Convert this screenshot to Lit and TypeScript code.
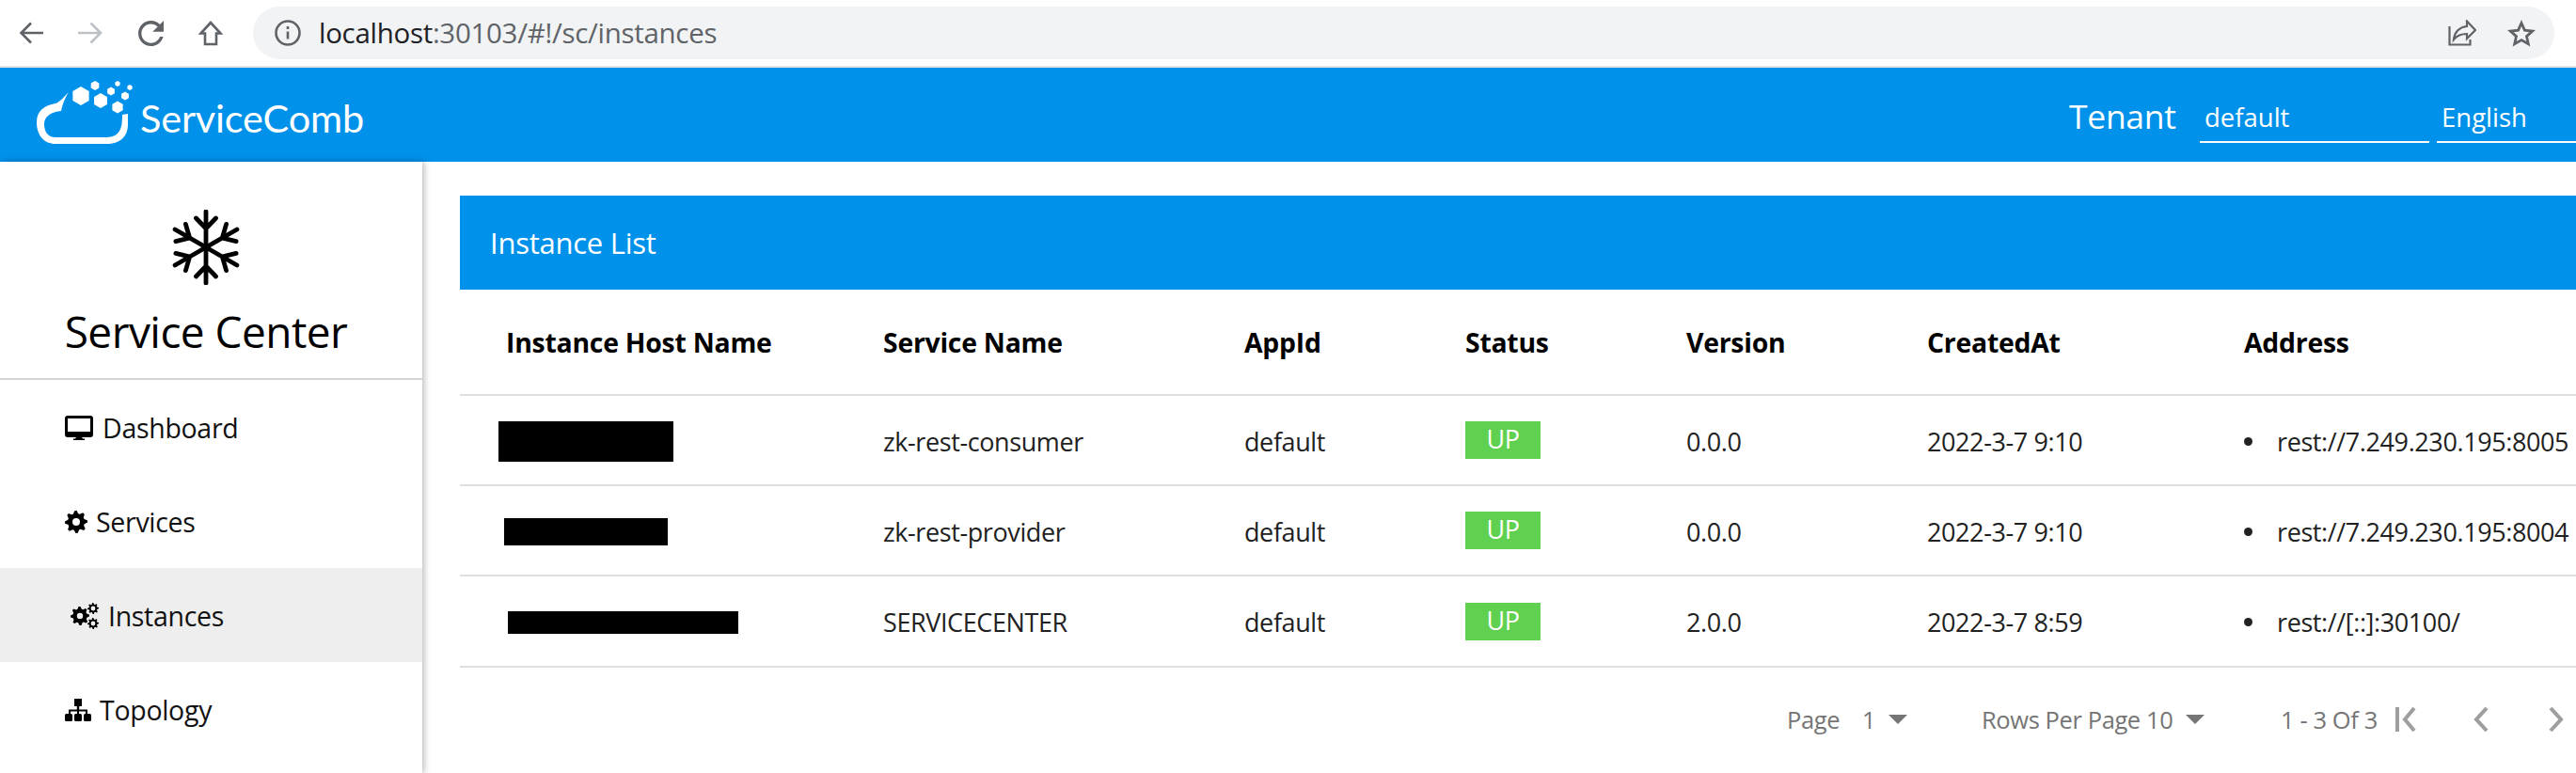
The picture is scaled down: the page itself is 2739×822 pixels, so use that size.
import { LitElement, html, css, svg } from "lit";
import { customElement } from "lit/decorators.js";

function gear(cx: number, cy: number, ro: number, ri: number, hole: number, teeth = 8) {
  let d = "";
  const n = teeth * 4;
  for (let i = 0; i < n; i++) {
    const a = (i / n) * Math.PI * 2 - Math.PI / n * 1.5 - Math.PI / 2;
    const r = i % 4 < 2 ? ro : ri;
    d += `${i ? "L" : "M"}${(cx + r * Math.cos(a)).toFixed(2)} ${(cy + r * Math.sin(a)).toFixed(2)}`;
  }
  d += `ZM${cx + hole} ${cy}A${hole} ${hole} 0 1 0 ${cx - hole} ${cy}A${hole} ${hole} 0 1 0 ${cx + hole} ${cy}Z`;
  return d;
}

const hexes: [number, number, number][] = [
  [47, 16, 10], [68, 21, 8], [86, 28, 6.5], [62, 5, 5], [79, 11, 4.5], [94, 16, 4.5], [86, 3, 3], [99, 7, 3],
];
const hexPath = (x: number, y: number, r: number) =>
  [0, 1, 2, 3, 4, 5]
    .map((i) => {
      const a = (i * Math.PI) / 3 + Math.PI / 6;
      return `${i ? "L" : "M"}${(x + r * Math.cos(a)).toFixed(2)} ${(y + r * Math.sin(a)).toFixed(2)}`;
    })
    .join("") + "Z";

const rows = [
  { w: 186, h: 43, m: 41, svc: "zk-rest-consumer", ver: "0.0.0", at: "2022-3-7 9:10", addr: "rest://7.249.230.195:8005" },
  { w: 174, h: 29, m: 47, svc: "zk-rest-provider", ver: "0.0.0", at: "2022-3-7 9:10", addr: "rest://7.249.230.195:8004" },
  { w: 245, h: 24, m: 51, svc: "SERVICECENTER", ver: "2.0.0", at: "2022-3-7 8:59", addr: "rest://[::]:30100/" },
];

@customElement("app-root")
export class AppRoot extends LitElement {
  static styles = css`
    :host { display: block; width: 100%; height: 822px; overflow: hidden; background: #fff;
      font-family: "Open Sans", "Noto Sans", sans-serif; color: #000; }
    .toolbar { height: 70px; display: flex; align-items: center; border-bottom: 2px solid #e3e3e3; box-sizing: content-box; }
    .nav-icons { display: flex; align-items: center; padding-left: 20px; gap: 37px; width: 269px; flex: none; box-sizing: border-box; }
    .nav-icons svg { display: block; fill: none; stroke: #5f6368; stroke-width: 2.6; }
    .nav-icons svg.off { stroke: #bdc1c6; }
    .nav-icons svg.solid { fill: #5f6368; stroke: none; }
    .bar { width: 2447px; flex: none; height: 56px; border-radius: 28px; background: #f1f3f4; display: flex; align-items: center;
      padding: 0 20px 0 23px; box-sizing: border-box; }
    .url { margin: -2px 0 0 19px; font-size: 29.5px; color: #5f6368; letter-spacing: -0.3px; flex: 1; white-space: nowrap; }
    .url b { font-weight: 400; color: #202124; }
    .bar svg { display: block; flex: none; }
    .bar .share { margin-right: 33px; }
    .header { height: 100px; background: #0091ea; color: #fff; display: flex; align-items: center; }
    .logo { display: flex; align-items: center; padding-left: 39px; flex: 1; }
    .logo svg { display: block; margin-top: -5px; }
    .logo span { font-family: "Lato", sans-serif; font-weight: 400; font-size: 41.5px; margin-left: 8px; margin-top: 6px; letter-spacing: -0.2px; }
    .tenant { font-size: 35.5px; width: 139px; margin-top: 2px; letter-spacing: -0.3px; }
    .field { border-bottom: 2px solid #fff; font-size: 27.5px; height: 46px; line-height: 38px; box-sizing: border-box; align-self: flex-end; margin-bottom: 20px; }
    .f1 { width: 244px; padding-left: 5px; margin-right: 8px; }
    .f2 { width: 148px; padding-left: 5px; }
    .body { display: flex; height: 650px; }
    .side { width: 449px; flex: none; background: #fff; box-shadow: 2px 0 7px rgba(0, 0, 0, 0.28); position: relative; }
    .brand { height: 230px; border-bottom: 2px solid #d5d5d5; box-sizing: content-box; text-align: center; padding-right: 11px; }
    .brand svg { display: block; margin: 0 auto; padding-top: 51px; stroke: #000; stroke-width: 4.8; stroke-linecap: round; fill: none; }
    .brand div { font-size: 46px; line-height: 54px; margin-top: 22px; letter-spacing: -0.55px; }
    .item { height: 100px; display: flex; align-items: center; padding-left: 69px; font-size: 28.5px; color: #111; letter-spacing: -0.3px; padding-top: 1px; box-sizing: border-box; }
    .item svg { display: block; flex: none; fill: #000; }
    .item.on { background: #eee; padding-left: 75px; }
    .item .dash { margin-right: 10px; }
    .item .svc { margin-right: 9px; }
    .item .inst { margin-right: 10px; }
    .item .topo { margin-right: 9px; }
    .main { flex: 1; padding: 36px 0 0 40px; min-width: 0; }
    .title { height: 100px; background: #0091ea; color: #fff; font-size: 31px; display: flex; align-items: center; padding-left: 32px; letter-spacing: -0.25px; }
    table { border-collapse: separate; border-spacing: 0; table-layout: fixed; width: 2250px; }
    th, td { padding: 0; text-align: left; border-bottom: 2px solid #e0e0e0; vertical-align: middle; box-sizing: border-box; }
    th { height: 113px; font-size: 28.4px; font-weight: 700; letter-spacing: -0.25px; }
    th.c1 { padding-left: 49px; }
    td { height: 96px; font-size: 27px; color: #212121; letter-spacing: -0.4px; padding-top: 2px; }
    tr:last-child td { height: 97px; }
    .c1 { width: 450px; } .c2 { width: 384px; } .c3 { width: 235px; } .c4 { width: 235px; } .c5 { width: 256px; } .c6 { width: 337px; }
    .mask { display: block; background: #000; }
    .up { display: block; width: 80px; height: 40px; line-height: 38px; text-align: center; background: #5fd04f; color: #fff; margin-bottom: 2px; }
    ul { margin: 0; padding: 0; list-style: none; }
    li { white-space: nowrap; display: flex; align-items: center; }
    li::before { content: ""; width: 9px; height: 9px; border-radius: 50%; background: #212121; margin-right: 26px; flex: none; }
    .pager { display: grid; grid-template-columns: 207px 318px 122px 83px 80px 30px; align-items: center; padding: 38px 0 0 1411px;
      color: #757575; font-size: 25.5px; letter-spacing: -0.4px; white-space: nowrap; }
    .pg { display: flex; align-items: center; }
    .pg .one { margin-left: 24px; }
    .tri { width: 0; height: 0; border: 10px solid transparent; border-top-color: #757575; border-bottom: 0; margin-left: 14px; }
    .pager svg { display: block; fill: none; stroke: #9e9e9e; stroke-width: 4; }
  `;

  render() {
    return html`
      <div class="toolbar">
        <div class="nav-icons">
          <svg width="26" height="24" viewBox="0 0 26 24"><path d="M26 12H3M13 1.5 2.5 12 13 22.5" /></svg>
          <svg class="off" width="27" height="24" viewBox="0 0 27 24"><path d="M0 12h23M13.5 1.5 24 12 13.5 22.5" /></svg>
          <svg class="solid" width="27" height="27" viewBox="4 4 16 16"><path d="M17.65 6.35C16.2 4.9 14.21 4 12 4c-4.42 0-7.99 3.58-7.99 8s3.57 8 7.99 8c3.73 0 6.84-2.55 7.73-6h-2.08c-.82 2.33-3.04 4-5.65 4-3.31 0-6-2.69-6-6s2.69-6 6-6c1.66 0 3.14.69 4.22 1.78L13 11h7V4l-2.35 2.35z" /></svg>
          <svg width="26" height="27" viewBox="0 0 26 27"><path d="M13 2 2.5 13.5H7V25h12V13.5h4.5Z" /></svg>
        </div>
        <div class="bar">
          <svg width="28" height="28" viewBox="0 0 28 28"><circle cx="14" cy="14" r="12.5" fill="none" stroke="#5f6368" stroke-width="2.6"/><path d="M14 12.5v8M14 7v3" stroke="#5f6368" stroke-width="2.6"/></svg>
          <div class="url"><b>localhost</b>:30103/#!/sc/instances</div>
          <svg class="share" width="30" height="28" viewBox="0 0 30 28" fill="none" stroke="#5f6368" stroke-width="2.2"><path d="M1.5 7v19.5h22V21"/><path d="M20 1.5 29 11l-9 9v-5c-6 0-10 1-14 6 1-8 6-13 14-14Z"/></svg>
          <svg width="30" height="29" viewBox="0 0 30 29" fill="none" stroke="#5f6368" stroke-width="2.8"><path d="M15 3.5l3.4 7.6 8.3.9-6.2 5.6 1.8 8.2-7.3-4.2-7.3 4.2 1.8-8.2-6.2-5.6 8.3-.9Z"/></svg>
        </div>
      </div>
      <div class="header">
        <div class="logo">
          <svg width="102" height="68" viewBox="0 0 102 68" fill="#fff">
            <path d="M34 12C28 18 24 23 20 24 8 26 0 32 0 44 0 58 8 67 20 67L74 67C88 67 97 60 97 46L97 35 91 36C91 48 90 60 74 60L20 60C12 60 8 54 8 46 8 38 15 33 26 32 27 26 30 18 34 12Z"/>
            ${hexes.map(([x, y, r]) => svg`<path d=${hexPath(x, y, r)} />`)}
          </svg>
          <span>ServiceComb</span>
        </div>
        <div class="tenant">Tenant</div>
        <div class="field f1">default</div>
        <div class="field f2">English</div>
      </div>
      <div class="body">
        <aside class="side">
          <div class="brand">
            <svg width="72" height="80" viewBox="-36 -40 72 80">
              ${[0, 60, 120, 180, 240, 300].map(
                (a) => svg`<g transform="rotate(${a})"><path d="M0 0V-38M-10.5 -31 0 -20 10.5 -31" /></g>`
              )}
            </svg>
            <div>Service Center</div>
          </div>
          <div class="item">
            <svg class="dash" width="30" height="26" viewBox="0 0 30 26"><path fill-rule="evenodd" d="M3 0h24a3 3 0 0 1 3 3v17a3 3 0 0 1-3 3H18l1 1.5h2V26H9v-1.5h2L12 23H3a3 3 0 0 1-3-3V3a3 3 0 0 1 3-3Zm0 3v14h24V3Z"/></svg>
            Dashboard
          </div>
          <div class="item">
            <svg class="svc" width="24" height="24" viewBox="0 0 24 24"><path fill-rule="evenodd" d=${gear(12, 12, 12, 9, 4)} /></svg>
            Services
          </div>
          <div class="item on">
            <svg class="inst" width="30" height="28" viewBox="0 0 30 28"><path fill-rule="evenodd" d=${gear(10, 14, 10, 7.6, 3.2)} /><path fill-rule="evenodd" d=${gear(24, 6, 6, 4.3, 2.4)} /><path fill-rule="evenodd" d=${gear(24, 22, 6, 4.3, 2.4)} /></svg>
            Instances
          </div>
          <div class="item">
            <svg class="topo" width="28" height="24" viewBox="0 0 28 24"><path d="M10 0h8v8h-2.8v3.5H24V16h-2v-2.5h-7V16h-2v-2.5H6V16H4v-4.5h8.8V8H10Z"/><rect x="0" y="16" width="8" height="8" rx="1.5"/><rect x="10" y="16" width="8" height="8" rx="1.5"/><rect x="20" y="16" width="8" height="8" rx="1.5"/></svg>
            Topology
          </div>
        </aside>
        <main class="main">
          <div class="title">Instance List</div>
          <table>
            <thead>
              <tr>
                <th class="c1">Instance Host Name</th>
                <th class="c2">Service Name</th>
                <th class="c3">AppId</th>
                <th class="c4">Status</th>
                <th class="c5">Version</th>
                <th class="c6">CreatedAt</th>
                <th>Address</th>
              </tr>
            </thead>
            <tbody>
              ${rows.map(
                (r) => html`<tr>
                  <td><span class="mask" style="width:${r.w}px;height:${r.h}px;margin-left:${r.m}px"></span></td>
                  <td>${r.svc}</td>
                  <td>default</td>
                  <td><span class="up">UP</span></td>
                  <td>${r.ver}</td>
                  <td>${r.at}</td>
                  <td><ul><li>${r.addr}</li></ul></td>
                </tr>`
              )}
            </tbody>
          </table>
          <div class="pager">
            <div class="pg">Page <span class="one">1</span><span class="tri"></span></div>
            <div class="pg">Rows Per Page 10<span class="tri"></span></div>
            <div>1 - 3 Of 3</div>
            <svg width="22" height="26" viewBox="0 0 22 26"><path d="M2 0v26M20 1 10 13l10 12"/></svg>
            <svg width="16" height="26" viewBox="0 0 16 26"><path d="M14 1 3 13l11 12"/></svg>
            <svg width="16" height="26" viewBox="0 0 16 26"><path d="M2 1l11 12L2 25"/></svg>
          </div>
        </main>
      </div>
    `;
  }
}
